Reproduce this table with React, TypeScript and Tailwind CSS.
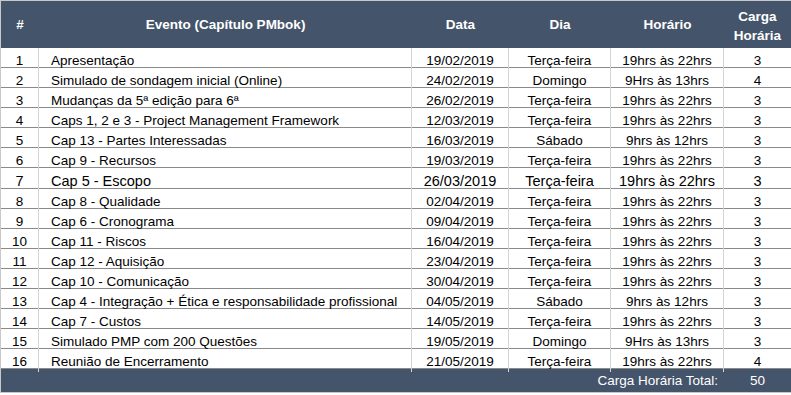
import React from "react";

type Row = [string, string, string, string, string, string];

const rows: Row[] = [
  ["1", "Apresentação", "19/02/2019", "Terça-feira", "19hrs às 22hrs", "3"],
  ["2", "Simulado de sondagem inicial (Online)", "24/02/2019", "Domingo", "9Hrs às 13hrs", "4"],
  ["3", "Mudanças da 5ª edição para 6ª", "26/02/2019", "Terça-feira", "19hrs às 22hrs", "3"],
  ["4", "Caps 1, 2 e 3 - Project Management Framework", "12/03/2019", "Terça-feira", "19hrs às 22hrs", "3"],
  ["5", "Cap 13 - Partes Interessadas", "16/03/2019", "Sábado", "9hrs às 12hrs", "3"],
  ["6", "Cap 9 - Recursos", "19/03/2019", "Terça-feira", "19hrs às 22hrs", "3"],
  ["7", "Cap 5 - Escopo", "26/03/2019", "Terça-feira", "19hrs às 22hrs", "3"],
  ["8", "Cap 8 - Qualidade", "02/04/2019", "Terça-feira", "19hrs às 22hrs", "3"],
  ["9", "Cap 6 - Cronograma", "09/04/2019", "Terça-feira", "19hrs às 22hrs", "3"],
  ["10", "Cap 11 - Riscos", "16/04/2019", "Terça-feira", "19hrs às 22hrs", "3"],
  ["11", "Cap 12 - Aquisição", "23/04/2019", "Terça-feira", "19hrs às 22hrs", "3"],
  ["12", "Cap 10 - Comunicação", "30/04/2019", "Terça-feira", "19hrs às 22hrs", "3"],
  ["13", "Cap 4 - Integração + Ética e responsabilidade profissional", "04/05/2019", "Sábado", "9hrs às 12hrs", "3"],
  ["14", "Cap 7 - Custos", "14/05/2019", "Terça-feira", "19hrs às 22hrs", "3"],
  ["15", "Simulado PMP com 200 Questões", "19/05/2019", "Domingo", "9Hrs às 13hrs", "3"],
  ["16", "Reunião de Encerramento", "21/05/2019", "Terça-feira", "19hrs às 22hrs", "4"],
];

const cols = "grid grid-cols-[38px_373px_97px_102px_113px_67px]";

export default function App() {
  return (
    <div
      className="w-[791px] h-[395px] bg-white text-black overflow-hidden"
      style={{ fontFamily: '"Liberation Sans", Arial, sans-serif' }}
    >
      <div className="border-t border-l border-[#c8c8c8]">
        <div className={`${cols} h-[47px] bg-[#44546a] text-white font-bold text-[13.5px]`}>
          <div className="flex items-center justify-center pt-[2px]">#</div>
          <div className="flex items-center justify-center pt-[2px]">Evento (Capítulo PMbok)</div>
          <div className="flex items-center justify-center pt-[2px]">Data</div>
          <div className="flex items-center justify-center pt-[2px]">Dia</div>
          <div className="flex items-center justify-center pt-[2px]">Horário</div>
          <div className="flex flex-col items-center justify-center leading-[19px] pt-[2px]">
            <span>Carga</span>
            <span>Horária</span>
          </div>
        </div>
        {rows.map((r, i) => {
          const big = r[0] === "7";
          return (
            <div
              key={i}
              className={`${cols} border-b border-[#8a8a8a] ${big ? "h-[21px] text-[14.5px]" : "h-[20px] text-[13.5px]"}`}
            >
              <div className="flex items-center justify-center pt-[3px] border-r border-[#d4d4d4]">{r[0]}</div>
              <div className="flex items-center pl-[12px] pt-[3px] border-r border-[#d4d4d4] whitespace-nowrap">{r[1]}</div>
              <div className="flex items-center justify-center pt-[3px] border-r border-[#d4d4d4]">{r[2]}</div>
              <div className="flex items-center justify-center pt-[3px] border-r border-[#d4d4d4]">{r[3]}</div>
              <div className="flex items-center justify-center pt-[3px] border-r border-[#d4d4d4]">{r[4]}</div>
              <div className="flex items-center justify-center pt-[3px]">{r[5]}</div>
            </div>
          );
        })}
        <div className={`${cols} h-[24px] bg-[#44546a] text-white text-[13.5px] border-b border-[#c8c8c8]`}>
          <div className="col-span-5 flex items-center justify-end pr-[6px] pt-[2px]">Carga Horária Total:</div>
          <div className="flex items-center justify-center pt-[2px]">50</div>
        </div>
      </div>
    </div>
  );
}
